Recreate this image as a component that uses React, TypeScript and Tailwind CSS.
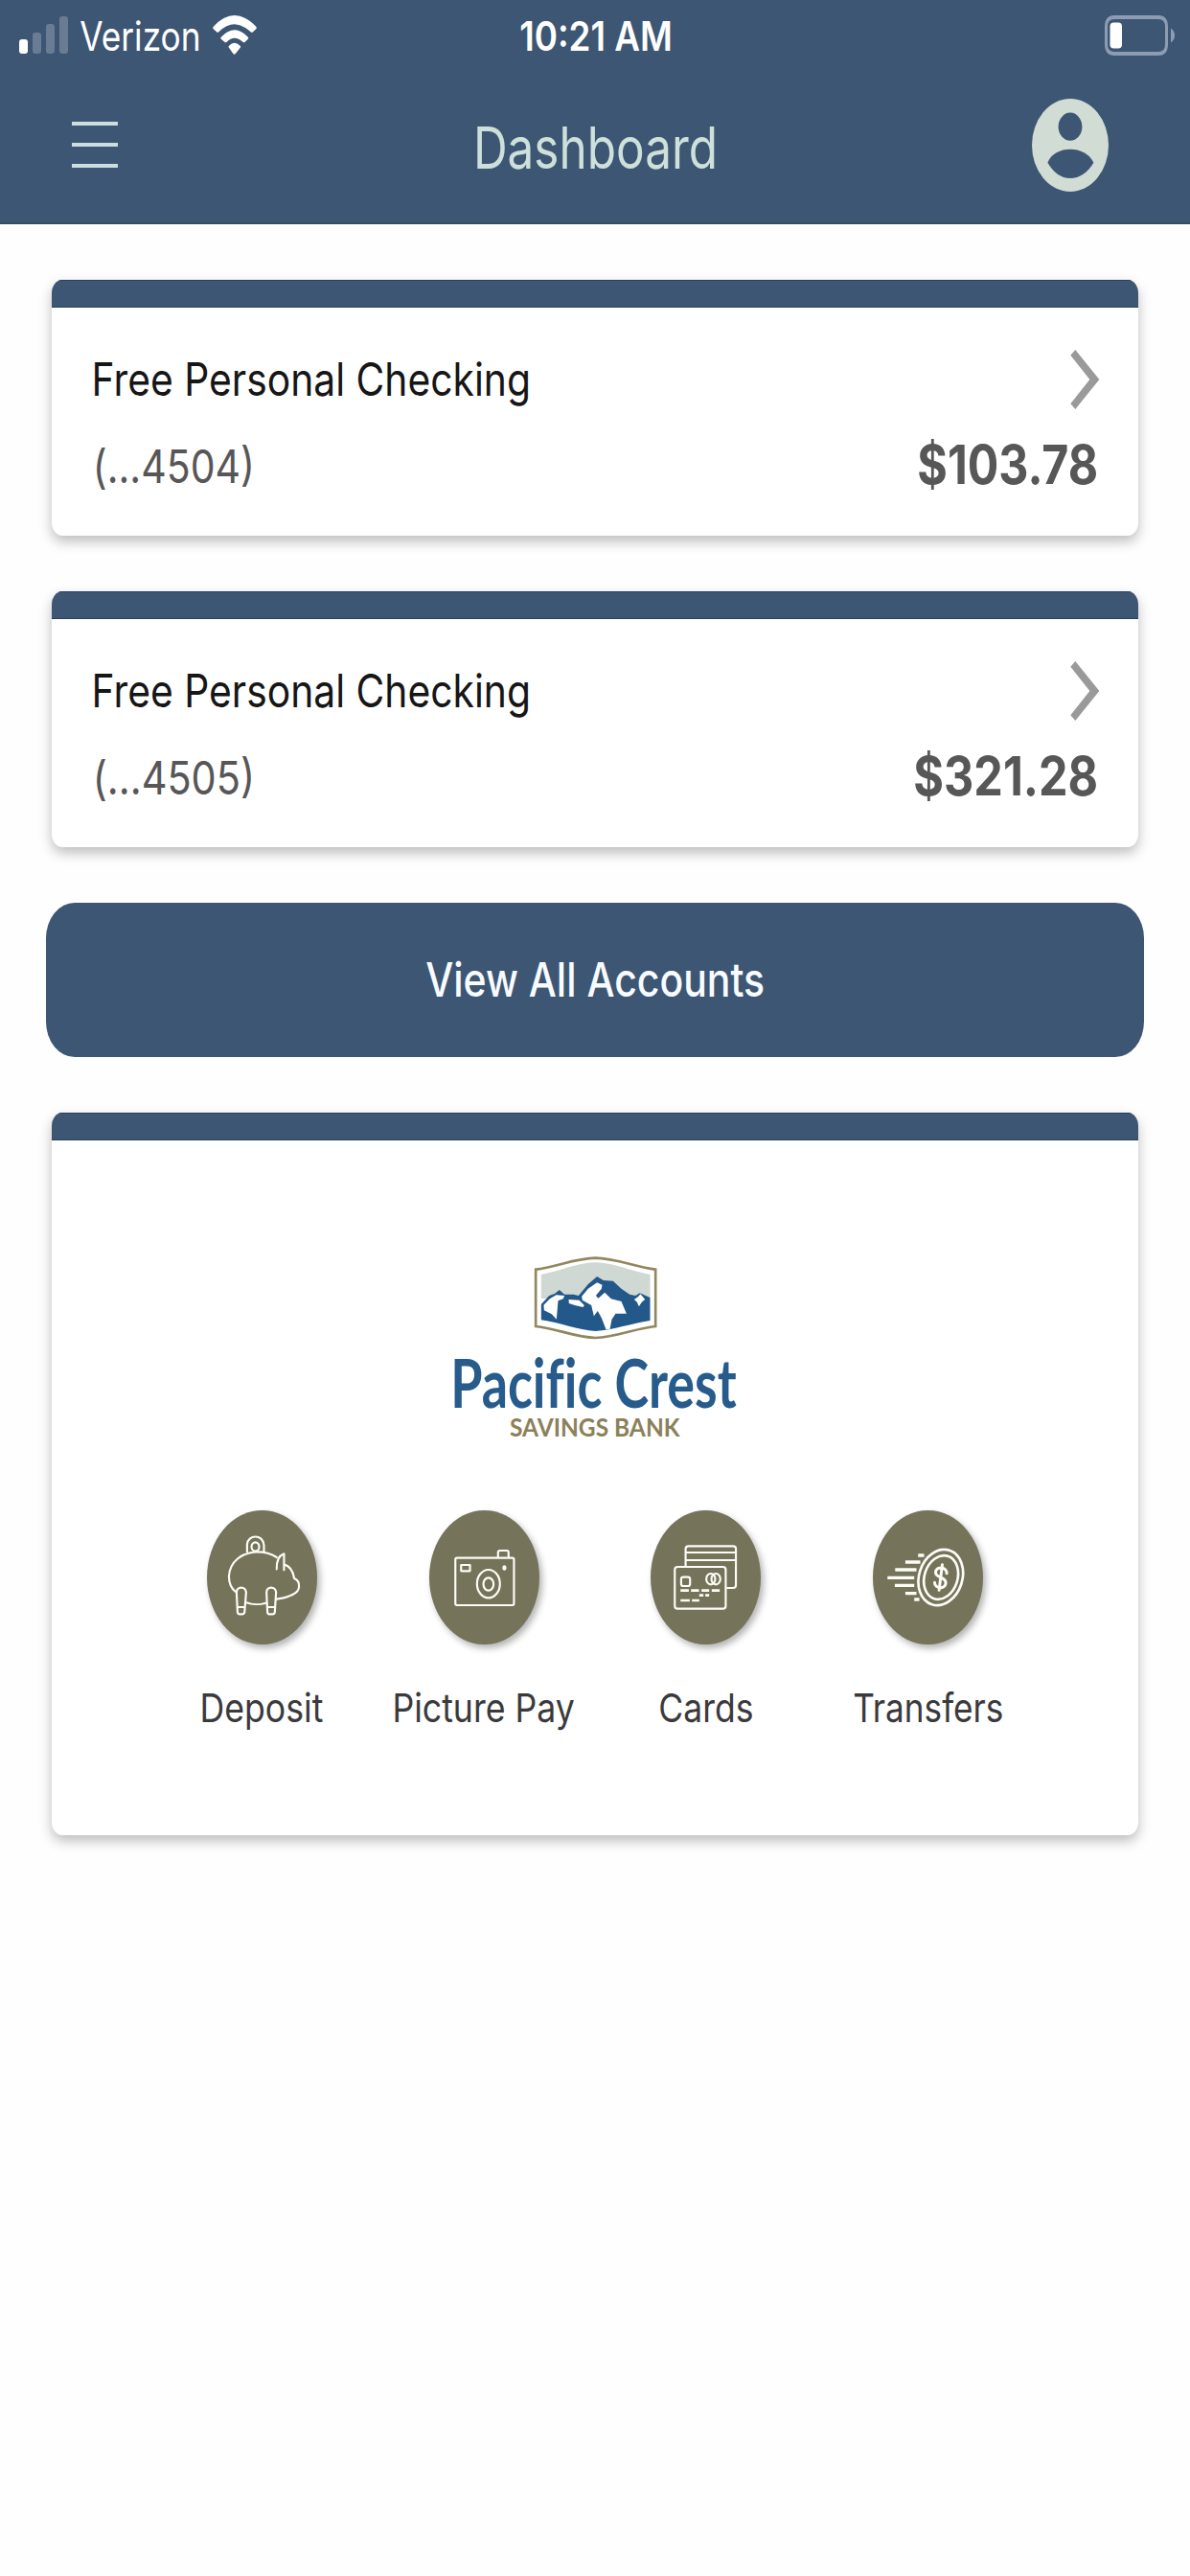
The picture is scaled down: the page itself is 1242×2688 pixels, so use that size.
import { useLayoutEffect, useRef, type ReactNode } from "react";

/** Sets one line of text so that its glyphs span exactly the width of its box. */
function FitText({ children, className = "" }: { children: string; className?: string }) {
  const box = useRef<HTMLSpanElement>(null);
  const ink = useRef<HTMLSpanElement>(null);

  useLayoutEffect(() => {
    const outer = box.current;
    const inner = ink.current;
    const ctx = document.createElement("canvas").getContext("2d");
    if (!outer || !inner || !ctx) return;
    const style = getComputedStyle(inner);
    ctx.font = `${style.fontWeight} ${style.fontSize} ${style.fontFamily}`;
    const m = ctx.measureText(children);
    const left = m.actualBoundingBoxLeft;
    const scale = outer.clientWidth / (left + m.actualBoundingBoxRight);
    inner.style.transform = `translateX(${left * scale}px) scaleX(${scale})`;
  }, [children]);

  return (
    <span ref={box} className={`block whitespace-nowrap ${className}`}>
      <span ref={ink} className="block w-max origin-left">
        {children}
      </span>
    </span>
  );
}

function StatusBar() {
  return (
    <div className="grid h-[76px] grid-cols-3 items-center text-white">
      <div className="flex items-center pl-5">
        <svg className="-mt-1 h-[39px] w-[51px]" viewBox="0 0 51 39">
          <rect x="0" y="24" width="9" height="15" rx="3" fill="#fff" />
          <g fill="#697c93">
            <rect x="14" y="17" width="9" height="22" rx="3" />
            <rect x="28" y="8" width="9" height="31" rx="3" />
            <rect x="42" y="0" width="9" height="39" rx="3" />
          </g>
        </svg>
        <FitText className="ml-[13px] w-[123px] text-[42.5px] leading-[76px]">Verizon</FitText>
        <svg className="-mt-1 ml-[15px] h-[41px] w-[46px]" viewBox="561 45 116 123" preserveAspectRatio="none" fill="#fff">
          <path d="M563 88Q560 84 563 80Q618 10 675 80Q678 84 675 88L667 97Q664 100 661 97Q618 49 577 97Q574 100 571 97Z" />
          <path d="M583 119Q581 116 583 113Q618 68 654 113Q656 116 654 119L646 128Q643 131 640 128Q618 105 598 128Q595 131 592 128Z" />
          <path d="M604 147Q601 143 604 140Q618 122 633 140Q636 143 633 147L621 165Q618 169 615 165Z" />
        </svg>
      </div>
      <FitText className="w-[157px] justify-self-center text-[42.5px] leading-[76px] font-semibold">10:21 AM</FitText>
      <svg className="mr-4 -mt-0.5 h-[42px] w-[73px] justify-self-end" viewBox="0 0 73 42">
        <path
          fillRule="evenodd"
          fill="#8c9cb2"
          d="M10 0H56Q66 0 66 12V30Q66 42 56 42H10Q0 42 0 30V12Q0 0 10 0ZM10 4Q3 4 3 12V30Q3 38 10 38H56Q63 38 63 30V12Q63 4 56 4Z"
        />
        <path fill="#8c9cb2" d="M69 13.500Q73 16 73 21T69 28.500Z" />
        <rect x="5.500" y="7.500" width="12.500" height="27" rx="4" fill="#fff" />
      </svg>
    </div>
  );
}

function Header() {
  return (
    <header className="h-[234px] border-b-2 border-[#364b64] bg-[#3d5673]">
      <StatusBar />
      <div className="grid h-[150px] grid-cols-3 items-center">
        <button className="ml-[75px] flex w-[48px] flex-col gap-[17.500px]" aria-label="Menu">
          <span className="h-[4.500px] bg-[#cbdfe0]" />
          <span className="h-[4.500px] bg-[#cbdfe0]" />
          <span className="h-[4.500px] bg-[#cbdfe0]" />
        </button>
        <FitText className="mt-[5px] ml-[2px] w-[248px] justify-self-center text-[60px] leading-[80px] text-[#cde0da]">Dashboard</FitText>
        <svg className="mr-[85px] h-[97px] w-[80px] justify-self-end" viewBox="0 0 200 292" preserveAspectRatio="none">
          <ellipse cx="100" cy="146" rx="100" ry="146" fill="#d1dcd5" />
          <ellipse cx="100" cy="88" rx="31" ry="44" fill="#3d5673" />
          <path d="M41 201C50 173 75 159 100 159S150 173 161 201C145 232 125 250 100 250S57 232 41 201Z" fill="#3d5673" />
        </svg>
      </div>
    </header>
  );
}

function Card({ children, className = "" }: { children: ReactNode; className?: string }) {
  return (
    <section
      className={`overflow-hidden rounded-[11px/14px] bg-white shadow-[0_6px_13px_rgba(0,0,0,0.26)] ${className}`}
    >
      <div className="h-[29px] border-y border-[#25415f] bg-[#3d5673]" />
      {children}
    </section>
  );
}

function Account({ number, amount, amountWidth }: { number: string; amount: string; amountWidth: string }) {
  return (
    <Card className="h-[267px]">
      <div className="mt-[45px] flex h-[60px] items-center justify-between pr-[40px] pl-[45px]">
        <FitText className="w-[452px] text-[48px] leading-[60px] text-[#161616]">Free Personal Checking</FitText>
        <svg className="h-[62px] w-[31px]" viewBox="652 286 91 186" fill="#9a9a9a">
          <path d="M667 286L742 379L667 472L652 455L712 379L652 303Z" />
        </svg>
      </div>
      <div className="mt-[31px] flex h-[60px] items-center justify-between pr-[44px] pl-[47px] text-[#575757]">
        <FitText className="w-[161px] text-[48.500px] leading-[60px]">{number}</FitText>
        <FitText className={`-mt-[5px] text-[56px] leading-[60px] font-bold ${amountWidth}`}>{amount}</FitText>
      </div>
    </Card>
  );
}

function Logo() {
  return (
    <div className="flex flex-col items-center pt-[120px]">
      <svg className="h-[88px] w-[129px]" viewBox="350 90 386 264">
        <path
          d="M356 134C420 126 480 99 543 98C606 99 668 126 731 134V312C668 318 606 347 543 348C480 347 420 318 356 312Z"
          fill="#fff"
          stroke="#91875f"
          strokeWidth="8"
        />
        <path d="M373 150C430 139 488 113 543 112C598 113 656 139 714 150V225H373Z" fill="#cfd8d3" />
        <path
          d="M373 243L398 216L415 210L430 198L446 212L474 212L490 216L520 180L548 156L568 168L598 170L624 194L650 212L668 216L682 208L714 222V294C656 302 600 324 543 327C488 324 430 300 373 292Z"
          fill="#23588a"
        />
        <g fill="#fff">
          <path d="M381 245L400 226L420 214L446 216L442 226L426 232L421 290L406 274L382 262Z" />
          <path d="M459 228L492 230L508 246L504 252L478 246L460 240Z" />
          <path d="M500 218L520 194L548 175L564 182L562 194L544 216L552 224L572 206L592 226L624 234L640 272L606 272L594 290L588 322L576 322L562 286L550 264L538 280L530 246L502 230Z" />
          <path d="M664 228L676 220L684 211L698 228L688 236L679 250L673 236Z" />
        </g>
      </svg>
      <FitText className="mt-[13px] h-[62px] w-[294px] [font-family:Lato,sans-serif] text-[70px] leading-[62px] font-bold text-[#265b8b] [font-variant-ligatures:none]">
        Pacific Crest
      </FitText>
      <FitText className="mt-[1px] h-[30px] w-[178px] [font-family:Lato,sans-serif] text-[27px] leading-[30px] font-bold text-[#8b8159]">
        SAVINGS BANK
      </FitText>
    </div>
  );
}

function Action({ viewBox, label, labelWidth, children }: { viewBox: string; label: string; labelWidth: string; children: ReactNode }) {
  return (
    <button className="flex flex-col items-center">
      <span className="h-[140px] w-[115px] rounded-[50%] bg-[#757359] shadow-[3px_4px_7px_rgba(0,0,0,0.3)]">
        <svg
          className="h-full w-full"
          viewBox={viewBox}
          preserveAspectRatio="none"
          fill="none"
          stroke="#fdfdf8"
          strokeWidth="6.500"
          strokeLinecap="round"
          strokeLinejoin="round"
        >
          {children}
        </svg>
      </span>
      <FitText className={`mt-[36px] text-[41px] leading-[60px] text-[#3a3a3c] ${labelWidth}`}>{label}</FitText>
    </button>
  );
}

function Actions() {
  return (
    <div className="mx-auto mt-[71.500px] grid w-[926px] grid-cols-4">
      <Action viewBox="80 77 346 420" label="Deposit" labelWidth="w-[126px]">
        <path d="M170 332C155 320 149 300 149 284C151 238 190 208 238 207C262 207 282 213 299 224" />
        <path d="M206 207V184C208 152 256 150 259 186V205" />
        <ellipse cx="232" cy="191" rx="12" ry="14" />
        <path d="M299 261C298 236 306 219 322 213V264M322 246C344 252 351 270 354 290C364 294 370 302 369 316C369 336 338 350 298 355" />
        <path d="M204 366C220 372 246 373 265 367" />
        <path d="M173 334C173 314 202 314 203 334L198 396Q197 402 190 402H183Q177 402 176 396ZM176 380H199" />
        <path d="M267 334C267 314 296 314 297 334L293 396Q292 402 286 402H276Q270 402 270 396ZM270 380H294" />
      </Action>
      <Action viewBox="772 77 346 420" label="Picture Pay" labelWidth="w-[187px]">
        <rect x="854" y="226" width="184" height="148" rx="5" />
        <path d="M988 224V209Q988 203 994 203H1016Q1021 203 1021 209V224" />
        <rect x="872" y="248" width="28" height="19" rx="1" />
        <ellipse cx="958" cy="307" rx="36" ry="44" />
        <ellipse cx="958" cy="308" rx="16" ry="20" />
        <ellipse cx="1008" cy="257" rx="3" ry="5" fill="#fdfdf8" />
      </Action>
      <Action viewBox="119 77 346 420" label="Cards" labelWidth="w-[96px]">
        <path d="M229 252V198Q229 189 238 189H378Q387 189 387 198V311Q387 320 378 320H360M230 209H386M230 233H386" />
        <rect x="195" y="254" width="160" height="131" rx="9" />
        <rect x="215" y="286" width="28" height="28" rx="7" />
        <ellipse cx="308" cy="292" rx="14" ry="17" />
        <ellipse cx="324" cy="292" rx="14" ry="17" />
        <path strokeLinecap="butt" strokeWidth="8" d="M213 328H239M246 328H271M279 328H303M311 328H336M272 343H285M291 343H303M213 359H242M249 359H272" />
      </Action>
      <Action viewBox="812 77 346 420" label="Transfers" labelWidth="w-[155px]">
        <g strokeWidth="8">
          <ellipse cx="1025" cy="287" rx="68" ry="89" transform="rotate(18 1025 287)" />
          <ellipse cx="1026" cy="287" rx="52" ry="70" transform="rotate(18 1026 287)" />
        </g>
        <path strokeWidth="9" d="M1044 274C1044 253 1010 251 1009 271C1008 289 1042 285 1041 305C1039 326 1006 323 1006 303M1030 247L1020 327" />
        <path strokeLinecap="butt" strokeWidth="10" d="M954 218H973M914 239H961M882 263H949M858 288H942M881 312H942M914 337H949M942 356H958" />
      </Action>
    </div>
  );
}

export default function App() {
  return (
    <div className="min-h-[2688px] w-[1242px] bg-[#fefefe] [font-family:Inter,sans-serif]">
      <Header />
      <main className="flex flex-col gap-[58px] px-[54px] pt-[58px]">
        <Account number="(...4504)" amount="$103.78" amountWidth="w-[185px]" />
        <Account number="(...4505)" amount="$321.28" amountWidth="w-[189px]" />
        <button className="-mx-[6px] flex h-[161px] items-center justify-center rounded-[30px/37px] bg-[#3d5673]">
          <FitText className="w-[352px] text-[49px] leading-[60px] font-medium text-[#f8fbff]">View All Accounts</FitText>
        </button>
        <Card className="h-[754px]">
          <Logo />
          <Actions />
        </Card>
      </main>
    </div>
  );
}
